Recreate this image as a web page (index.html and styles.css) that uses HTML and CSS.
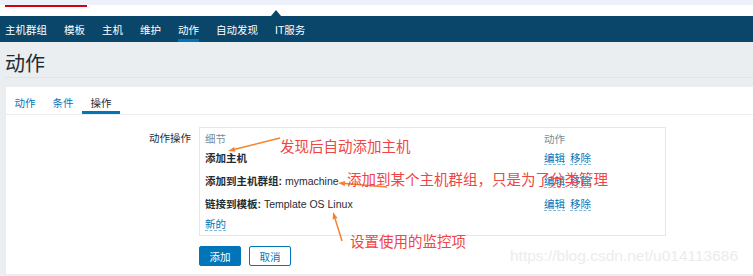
FILE: index.html
```html
<!DOCTYPE html>
<html lang="zh-CN">
<head>
  <meta charset="UTF-8" />
  <title>动作</title>
  <link rel="stylesheet" href="styles.css">
</head>
<body>

  <div class="top-strip"></div>
  <div class="top-white"><div class="loader"></div></div>

  <nav class="subnav">
    <a href="#">主机群组</a>
    <a href="#">模板</a>
    <a href="#">主机</a>
    <a href="#">维护</a>
    <a href="#" class="selected">动作</a>
    <a href="#">自动发现</a>
    <a href="#">IT服务</a>
  </nav>

  <header class="page-title">
    <h1>动作</h1>
  </header>

  <div class="container">
    <ul class="tabs">
      <li><a href="#">动作</a></li>
      <li><a href="#">条件</a></li>
      <li class="active"><a href="#">操作</a></li>
    </ul>

    <div class="form">
      <label class="form-label">动作操作</label>
      <div class="op-box">
        <div class="op-row op-head">
          <span>细节</span>
          <span>动作</span>
        </div>
        <div class="op-row">
          <span><b>添加主机</b></span>
          <span class="links"><a href="#">编辑</a><a href="#">移除</a></span>
        </div>
        <div class="op-row">
          <span><b>添加到主机群组:</b> mymachine</span>
          <span class="links"><a href="#">编辑</a><a href="#">移除</a></span>
        </div>
        <div class="op-row">
          <span><b>链接到模板:</b> Template OS Linux</span>
          <span class="links"><a href="#">编辑</a><a href="#">移除</a></span>
        </div>
        <div class="op-new"><a href="#">新的</a></div>
      </div>

      <div class="buttons">
        <button class="btn">添加</button>
        <button class="btn btn-alt">取消</button>
      </div>
    </div>
  </div>

  <!-- 标注 -->
  <div class="notes">
    <svg class="arrows" width="753" height="276" viewBox="0 0 753 276">
      <line x1="280" y1="138" x2="234" y2="149.5" />
      <polygon points="228,151 235.4,151.7 234.2,146.9" />
      <line x1="387" y1="187" x2="345" y2="183.6" />
      <polygon points="338,183 345.2,181.1 344.8,186.1" />
      <line x1="342" y1="241" x2="335.1" y2="218.7" />
      <polygon points="333,212 337.5,218 332.7,219.4" />
    </svg>
    <span class="note note-1">发现后自动添加主机</span>
    <span class="note note-2">添加到某个主机群组，只是为了分类管理</span>
    <span class="note note-3">设置使用的监控项</span>
    <span class="watermark">https://blog.csdn.net/u014113686</span>
  </div>

</body>
</html>
```

FILE: styles.css
```css
body {
  margin: 0;
  width: 753px;
  height: 276px;
  overflow: hidden;
  position: relative;
  background: #ebeef0;
  color: #1f2c33;
  font-family: "Liberation Sans", "Noto Sans CJK SC", sans-serif;
  font-size: 10.5px;
}
a {
  color: #0275b8;
  text-decoration: none;
}

.top-strip {
  height: 5px;
  background: #edf1f9;
}
.top-white {
  height: 11px;
  background: white;
}
.loader {
  margin-left: 5px;
  width: 82px;
  height: 2px;
  background: #d8000c;
}

.subnav {
  position: relative;
  display: flex;
  gap: 17px;
  height: 26px;
  padding-left: 5px;
  background: #0a466a;
}
.subnav::before {
  content: "";
  position: absolute;
  left: 271px;
  top: -6px;
  border-left: 5.5px solid transparent;
  border-right: 5.5px solid transparent;
  border-bottom: 6px solid #0a466a;
}
.subnav a {
  color: #ffffff;
  line-height: 26px;
  padding-top: 1px;
}
.subnav a.selected {
  box-shadow: inset 0 -3px 0 #0275b8;
}

.page-title {
  margin-left: 5px;
  height: 30px;
  padding-top: 5px;
  display: flex;
  align-items: center;
  border-bottom: 1px solid #dfe4e7;
}
.page-title h1 {
  margin: 0;
  font-size: 20px;
  font-weight: normal;
}

.container {
  margin: 9px 0 0 6px;
  background: white;
  padding-bottom: 8px;
}

.tabs {
  display: flex;
  list-style: none;
  margin: 0;
  padding: 0;
  height: 27px;
  border-bottom: 1px solid #ebeef0;
}
.tabs li {
  display: flex;
  align-items: center;
  box-sizing: border-box;
  height: 27px;
  padding: 3px 8.5px 0;
}
.tabs li.active {
  box-shadow: inset 0 -3px 0 #0275b8;
}
.tabs li.active a {
  color: #1f2c33;
}

.form {
  display: grid;
  grid-template-columns: 185px 467px;
  column-gap: 8px;
  margin-top: 12px;
}
.form-label {
  text-align: right;
  line-height: 16px;
  padding-top: 3px;
}
.op-box {
  box-sizing: border-box;
  border: 1px solid #e4e8eb;
  padding: 3px 5px;
}
.op-row {
  display: grid;
  grid-template-columns: 339px auto;
  height: 23px;
  line-height: 23px;
}
.op-head {
  height: 16px;
  line-height: 16px;
  color: #768d99;
}
.op-new {
  height: 16px;
  line-height: 16px;
}
.links a + a {
  margin-left: 5px;
}
.links a, .op-new a {
  border-bottom: 1px dashed rgba(2, 117, 184, 0.5);
}

.buttons {
  grid-column: 2;
  display: flex;
  gap: 8px;
  margin-top: 10px;
}
.btn {
  box-sizing: border-box;
  width: 42px;
  height: 20px;
  padding: 0;
  border: 1px solid #0275b8;
  border-radius: 2px;
  background: #0275b8;
  color: white;
  font-family: inherit;
  font-size: 10.5px;
}
.btn-alt {
  background: white;
  color: #0275b8;
}

.notes {
  position: absolute;
  left: 0;
  top: 0;
  width: 753px;
  height: 276px;
  pointer-events: none;
}
.arrows {
  position: absolute;
  left: 0;
  top: 0;
}
.arrows line {
  stroke: #f4822f;
  stroke-width: 1.5;
}
.arrows polygon {
  fill: #f4822f;
}
.note {
  position: absolute;
  color: #f04545;
  font-family: "Noto Sans CJK SC", sans-serif;
  font-size: 14.5px;
  line-height: 15px;
  white-space: nowrap;
}
.note-1 { left: 280px; top: 138px; }
.note-2 { left: 347px; top: 171px; }
.note-3 { left: 350px; top: 233px; }
.watermark {
  position: absolute;
  left: 510px;
  top: 248px;
  font-size: 15.5px;
  line-height: 16px;
  color: #ececec;
  text-shadow: 0 0 1px #fff;
  white-space: nowrap;
}
```
